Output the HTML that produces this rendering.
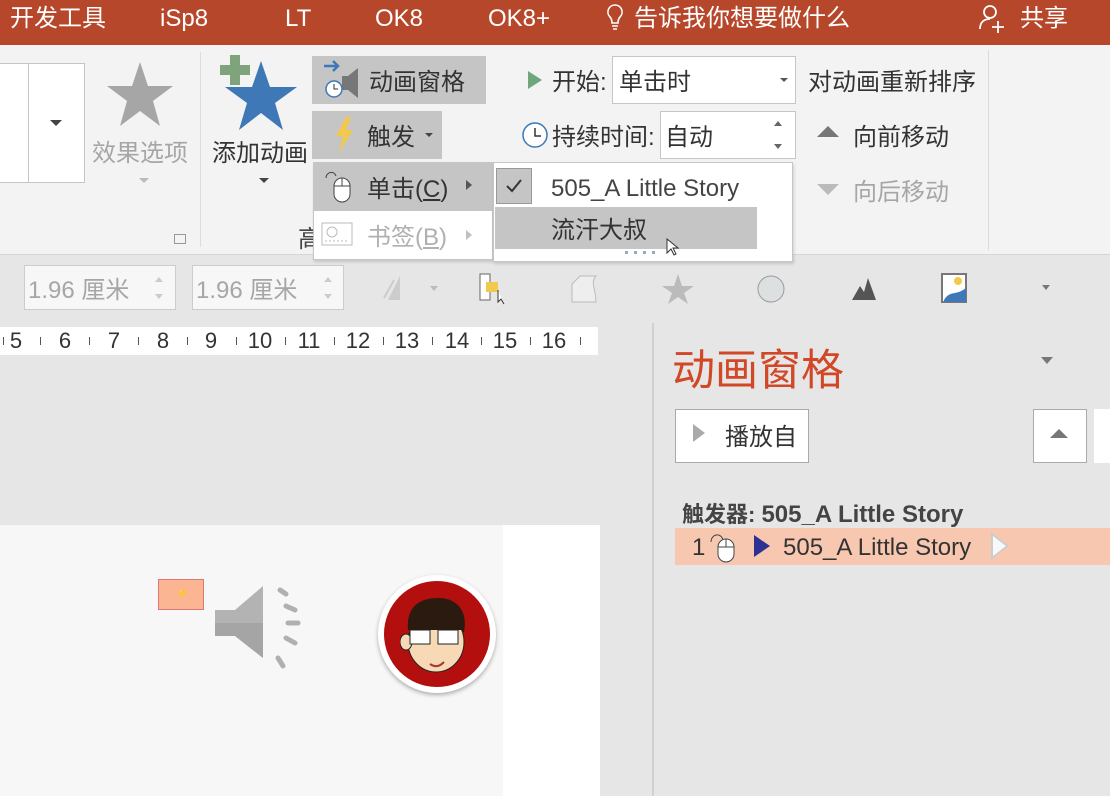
<!DOCTYPE html>
<html><head><meta charset="utf-8"><style>
*{margin:0;padding:0;box-sizing:border-box}
body{width:1110px;height:796px;overflow:hidden;position:relative;background:#e6e6e6;font-family:"Liberation Sans","Noto Sans CJK SC",sans-serif;color:#333}
.a{position:absolute;white-space:nowrap}
.t{color:#fff;font-size:24px;top:2px;line-height:34px}
.r{font-size:24px;color:#333;line-height:30px;transform:translateY(3px)}
.g{color:#a6a6a6}
.L{font-size:24px}
.rn{position:absolute;top:327px;font-size:22px;line-height:28px;color:#333;transform:translateX(-50%)}
.tk{position:absolute;top:337px;width:1px;height:8px;background:#555}
</style></head><body>
<div class="a" style="left:0;top:0;width:1110px;height:45px;background:#b7472a"></div>
<div class="a t" style="left:10px">开发工具</div>
<div class="a t" style="left:160px">iSp8</div>
<div class="a t" style="left:285px">LT</div>
<div class="a t" style="left:375px">OK8</div>
<div class="a t" style="left:488px">OK8+</div>
<svg class="a" style="left:604px;top:3px" width="22" height="30"><path d="M11 2a7 7 0 0 0-5 12c2 2 2 4 2 6h6c0-2 0-4 2-6a7 7 0 0 0-5-12zM8 23h6M9 26h4" stroke="#fff" stroke-width="1.6" fill="none"/></svg>
<div class="a t" style="left:634px">告诉我你想要做什么</div>
<svg class="a" style="left:978px;top:3px" width="30" height="32"><circle cx="12" cy="9" r="6" stroke="#fff" stroke-width="1.8" fill="none"/><path d="M2 26c0-7 4-10 10-10M20 18v12M14 24h12" stroke="#fff" stroke-width="1.8" fill="none"/></svg>
<div class="a t" style="left:1020px">共享</div>

<div class="a" style="left:0;top:45px;width:1110px;height:210px;background:#f3f3f3;border-bottom:1px solid #d6d6d6"></div>
<div class="a" style="left:0;top:63px;width:85px;height:120px;background:#fff;border:1px solid #c6c6c6;border-left:none"></div>
<div class="a" style="left:28px;top:63px;width:57px;height:120px;background:#fff;border:1px solid #c6c6c6"></div>
<div class="a" style="left:50px;top:120px;border:6px solid transparent;border-top:6px solid #444"></div>
<svg class="a" style="left:103px;top:60px" width="70" height="70"><polygon points="37,2 45,26 70,26 50,41 57,66 37,51 17,66 24,41 4,26 29,26" fill="#a6a6a6"/></svg>
<div class="a r g" style="left:92px;top:136px">效果选项</div>
<div class="a" style="left:139px;top:178px;border:5px solid transparent;border-top:5px solid #bbb"></div>
<div class="a" style="left:174px;top:234px;width:12px;height:10px;border:1px solid #999"></div>
<div class="a" style="left:200px;top:52px;width:1px;height:195px;background:#dcdcdc"></div>
<svg class="a" style="left:218px;top:55px" width="80" height="80"><polygon points="43,6 52,32 79,32 57,48 65,75 43,58 21,75 29,48 7,32 34,32" fill="#3f78b7"/><rect x="12" y="0" width="10" height="30" fill="#7fa37a"/><rect x="2" y="10" width="30" height="10" fill="#7fa37a"/></svg>
<div class="a r" style="left:212px;top:136px">添加动画</div>
<div class="a" style="left:259px;top:178px;border:5px solid transparent;border-top:5px solid #444"></div>
<div class="a" style="left:312px;top:56px;width:174px;height:48px;background:#c5c5c5"></div>
<svg class="a" style="left:320px;top:58px" width="46" height="44"><path d="M4 8h14M13 3l5 5-5 5" stroke="#3f78b7" stroke-width="2.5" fill="none"/><path d="M22 18h6l10-8v30l-10-8h-6z" fill="#777"/><circle cx="14" cy="31" r="8" fill="#fff" stroke="#3f78b7" stroke-width="1.5"/><path d="M14 26v5h4" stroke="#333" fill="none"/></svg>
<div class="a r" style="left:369px;top:65px">动画窗格</div>
<div class="a" style="left:312px;top:111px;width:130px;height:48px;background:#c5c5c5"></div>
<svg class="a" style="left:334px;top:116px" width="22" height="38"><polygon points="12,1 2,20 9,20 5,37 19,14 12,14 17,1" fill="#f2c94c"/></svg>
<div class="a r" style="left:367px;top:120px">触发</div>
<div class="a" style="left:425px;top:133px;border:4px solid transparent;border-top:4px solid #444"></div>
<div class="a r g" style="left:298px;top:222px;color:#444">高</div>

<div class="a" style="left:528px;top:71px;border:9px solid transparent;border-left:14px solid #6fa77b;border-right:none"></div>
<div class="a r" style="left:552px;top:65px">开始:</div>
<div class="a" style="left:612px;top:56px;width:184px;height:48px;background:#fff;border:1px solid #c6c6c6"></div>
<div class="a r" style="left:619px;top:65px">单击时</div>
<div class="a" style="left:780px;top:78px;border:4px solid transparent;border-top:4px solid #555"></div>
<div class="a r" style="left:808px;top:65px">对动画重新排序</div>
<svg class="a" style="left:520px;top:120px" width="30" height="30"><circle cx="15" cy="15" r="12" fill="#fff" stroke="#3f78b7" stroke-width="1.5"/><path d="M15 8v8h6" stroke="#333" stroke-width="1.5" fill="none"/></svg>
<div class="a r" style="left:552px;top:120px">持续时间:</div>
<div class="a" style="left:660px;top:111px;width:136px;height:48px;background:#fff;border:1px solid #c6c6c6"></div>
<div class="a r" style="left:665px;top:120px">自动</div>
<div class="a" style="left:774px;top:117px;border:4px solid transparent;border-bottom:5px solid #666"></div>
<div class="a" style="left:774px;top:144px;border:4px solid transparent;border-top:5px solid #666"></div>
<div class="a" style="left:817px;top:126px;border:11px solid transparent;border-bottom:11px solid #777;border-top:none"></div>
<div class="a r" style="left:853px;top:120px">向前移动</div>
<div class="a" style="left:817px;top:184px;border:11px solid transparent;border-top:11px solid #bbb;border-bottom:none"></div>
<div class="a r g" style="left:853px;top:175px">向后移动</div>
<div class="a" style="left:988px;top:50px;width:1px;height:200px;background:#dcdcdc"></div>

<!-- menu 1 -->
<div class="a" style="left:313px;top:162px;width:180px;height:98px;background:#fff;border:1px solid #c6c6c6;box-shadow:1px 2px 3px rgba(0,0,0,.15)"></div>
<div class="a" style="left:314px;top:163px;width:178px;height:48px;background:#c5c5c5"></div>
<svg class="a" style="left:322px;top:168px" width="34" height="38"><path d="M4 10c0-6 8-8 10-2" stroke="#444" fill="none"/><rect x="12" y="10" width="16" height="24" rx="8" fill="#fff" stroke="#444"/><path d="M20 10v8M12 18h16" stroke="#444"/></svg>
<div class="a r" style="left:367px;top:172px">单击(<u>C</u>)</div>
<div class="a" style="left:466px;top:180px;border:5px solid transparent;border-left:6px solid #555;border-right:none"></div>
<svg class="a" style="left:321px;top:221px" width="34" height="28"><rect x="1" y="2" width="30" height="22" fill="#fff" stroke="#bbb"/><circle cx="11" cy="11" r="5" fill="none" stroke="#bbb"/><path d="M4 20h24" stroke="#bbb" stroke-dasharray="2 2"/></svg>
<div class="a r g" style="left:367px;top:220px;color:#b0b0b0">书签(<u>B</u>)</div>
<div class="a" style="left:466px;top:230px;border:5px solid transparent;border-left:6px solid #c0c0c0;border-right:none"></div>
<!-- menu 2 -->
<div class="a" style="left:493px;top:162px;width:300px;height:100px;background:#fff;border:1px solid #c6c6c6;box-shadow:1px 2px 3px rgba(0,0,0,.15)"></div>
<div class="a" style="left:496px;top:168px;width:36px;height:36px;background:#c5c5c5;border:1px solid #999"></div>
<svg class="a" style="left:504px;top:176px" width="20" height="20"><path d="M3 10l5 5 9-11" stroke="#333" stroke-width="2" fill="none"/></svg>
<div class="a r L" style="left:551px;top:171px;color:#444">505_A Little Story</div>
<div class="a" style="left:495px;top:207px;width:262px;height:42px;background:#c5c5c5"></div>
<div class="a r" style="left:551px;top:213px">流汗大叔</div>
<div class="a" style="left:625px;top:251px;width:34px;height:3px;background:repeating-linear-gradient(90deg,#9aa9bb 0 3px,transparent 3px 9px)"></div>
<svg class="a" style="left:666px;top:238px" width="14" height="20"><path d="M1 1v14l4-4 3 6 2-1-3-6h5z" fill="#fff" stroke="#333"/></svg>

<!-- row 2 -->
<div class="a" style="left:24px;top:265px;width:152px;height:45px;background:#f7f7f7;border:1px solid #ccc"></div>
<div class="a r g" style="left:28px;top:273px">1.96 厘米</div>
<div class="a" style="left:155px;top:273px;border:4px solid transparent;border-bottom:5px solid #ccc"></div>
<div class="a" style="left:155px;top:294px;border:4px solid transparent;border-top:5px solid #ccc"></div>
<div class="a" style="left:192px;top:265px;width:152px;height:45px;background:#f7f7f7;border:1px solid #ccc"></div>
<div class="a r g" style="left:196px;top:273px">1.96 厘米</div>
<div class="a" style="left:324px;top:273px;border:4px solid transparent;border-bottom:5px solid #ccc"></div>
<div class="a" style="left:324px;top:294px;border:4px solid transparent;border-top:5px solid #ccc"></div>
<svg class="a" style="left:380px;top:272px" width="60" height="34"><path d="M8 28l12-24v24z" fill="#ccc"/><path d="M4 26L14 8" stroke="#ccc" stroke-width="2"/><path d="M50 14l4 5 4-5z" fill="#bbb"/></svg>
<svg class="a" style="left:478px;top:272px" width="32" height="34"><rect x="2" y="2" width="10" height="26" fill="#fff" stroke="#666"/><rect x="8" y="10" width="12" height="10" fill="#f2c94c"/><path d="M20 18v12l3-3 3 5" stroke="#333" fill="#fff"/></svg>
<svg class="a" style="left:568px;top:274px" width="34" height="30"><path d="M4 28V10L12 2h16c-6 6 0 14 0 26z" fill="#eee" stroke="#bbb"/></svg>
<svg class="a" style="left:660px;top:272px" width="36" height="34"><polygon points="18,2 22,14 34,14 24,21 28,32 18,25 8,32 12,21 2,14 14,14" fill="#bbb"/></svg>
<svg class="a" style="left:755px;top:273px" width="32" height="32"><ellipse cx="16" cy="16" rx="13" ry="13" fill="#dde0e0" stroke="#999"/></svg>
<svg class="a" style="left:850px;top:276px" width="28" height="26"><path d="M2 24l8-14 4 6 4-14 8 22z" fill="#555"/></svg>
<svg class="a" style="left:940px;top:272px" width="34" height="34"><rect x="2" y="2" width="24" height="28" fill="#fff" stroke="#777" stroke-width="2"/><circle cx="18" cy="9" r="4" fill="#f2c94c"/><path d="M4 28c6-10 12-4 22-12v14H4z" fill="#3f78b7"/></svg>
<div class="a" style="left:1042px;top:285px;border:4px solid transparent;border-top:5px solid #777"></div>

<!-- ruler -->
<div class="a" style="left:0;top:327px;width:598px;height:28px;background:#fff"></div>
<span class="rn" style="left:16px">5</span><span class="rn" style="left:65px">6</span><span class="rn" style="left:114px">7</span><span class="rn" style="left:163px">8</span><span class="rn" style="left:211px">9</span><span class="rn" style="left:260px">10</span><span class="rn" style="left:309px">11</span><span class="rn" style="left:358px">12</span><span class="rn" style="left:407px">13</span><span class="rn" style="left:457px">14</span><span class="rn" style="left:505px">15</span><span class="rn" style="left:554px">16</span>
<div class="tk" style="left:3px"></div><div class="tk" style="left:40px"></div><div class="tk" style="left:89px"></div><div class="tk" style="left:138px"></div><div class="tk" style="left:187px"></div><div class="tk" style="left:236px"></div><div class="tk" style="left:285px"></div><div class="tk" style="left:334px"></div><div class="tk" style="left:383px"></div><div class="tk" style="left:432px"></div><div class="tk" style="left:481px"></div><div class="tk" style="left:530px"></div><div class="tk" style="left:580px"></div>

<!-- slide -->
<div class="a" style="left:0;top:525px;width:600px;height:271px;background:#f7f7f7"></div>
<div class="a" style="left:503px;top:525px;width:97px;height:271px;background:#fff"></div>
<div class="a" style="left:158px;top:579px;width:46px;height:31px;background:#fbb592;border:1px solid #d77"></div>
<div class="a" style="left:176px;top:588px;font-size:10px;color:#b80">⚡</div>
<svg class="a" style="left:210px;top:580px" width="100" height="90"><path d="M5 30h20l28-24v72L25 56H5z" fill="#b3b3b3"/><path d="M5 43h48v35L25 56H5z" fill="#a5a5a5"/><g stroke="#b0b0b0" stroke-width="5" stroke-linecap="round"><path d="M70 10l6 4M76 26l9 4M78 43h10M76 58l9 5M68 78l5 8"/></g></svg>
<div class="a" style="left:378px;top:575px;width:118px;height:118px;border-radius:50%;background:#fff;box-shadow:0 2px 4px rgba(0,0,0,.3)"></div>
<div class="a" style="left:384px;top:581px;width:106px;height:106px;border-radius:50%;background:#b40f0f"></div>
<svg class="a" style="left:400px;top:590px" width="76" height="92"><path d="M8 40c-2-22 10-32 30-32s30 14 26 34z" fill="#2a1a10"/><ellipse cx="36" cy="52" rx="28" ry="30" fill="#f7d9b5" stroke="#222"/><ellipse cx="6" cy="52" rx="6" ry="8" fill="#f7d9b5" stroke="#222"/><rect x="10" y="40" width="20" height="14" fill="#fff" stroke="#222"/><rect x="38" y="40" width="20" height="14" fill="#fff" stroke="#222"/><path d="M30 74c6 4 10 2 14-2" stroke="#a33" stroke-width="2" fill="none"/><path d="M8 40c0-14 20-22 40-18 10 2 16 10 14 18" fill="#2a1a10"/></svg>

<!-- pane -->
<div class="a" style="left:652px;top:323px;width:2px;height:473px;background:#d0d0d0"></div>
<div class="a" style="left:672px;top:336px;font-size:43px;color:#d24726">动画窗格</div>
<div class="a" style="left:1041px;top:357px;border:6px solid transparent;border-top:7px solid #777"></div>
<div class="a" style="left:675px;top:409px;width:134px;height:54px;background:#fff;border:1px solid #aaa"></div>
<div class="a" style="left:693px;top:424px;border:9px solid transparent;border-left:12px solid #aaa;border-right:none"></div>
<div class="a r" style="left:725px;top:420px">播放自</div>
<div class="a" style="left:1033px;top:409px;width:54px;height:54px;background:#fff;border:1px solid #aaa"></div>
<div class="a" style="left:1050px;top:429px;border:9px solid transparent;border-bottom:9px solid #777;border-top:none"></div>
<div class="a" style="left:1094px;top:409px;width:16px;height:54px;background:#fff"></div>
<div class="a" style="left:682px;top:497px;font-size:22px;font-weight:bold;color:#444">触发器: <span style="font-size:24px">505_A Little Story</span></div>
<div class="a" style="left:675px;top:528px;width:435px;height:37px;background:#f8c7b0"></div>
<div class="a r L" style="left:692px;top:530px">1</div>
<svg class="a" style="left:709px;top:530px" width="32" height="34"><path d="M2 12c0-8 10-10 12-2" stroke="#444" fill="none"/><rect x="9" y="9" width="16" height="23" rx="8" fill="#fff" stroke="#444"/><path d="M17 9v8M9 17h16" stroke="#444"/></svg>
<div class="a" style="left:754px;top:535px;border:11px solid transparent;border-left:16px solid #2e3192;border-right:none"></div>
<div class="a r L" style="left:783px;top:530px">505_A Little Story</div>
<div class="a" style="left:991px;top:532px;border:14px solid transparent;border-left:18px solid #ccc;border-right:none"></div>
<div class="a" style="left:993px;top:536px;border:10px solid transparent;border-left:13px solid #f8f8f8;border-right:none"></div>
</body></html>
